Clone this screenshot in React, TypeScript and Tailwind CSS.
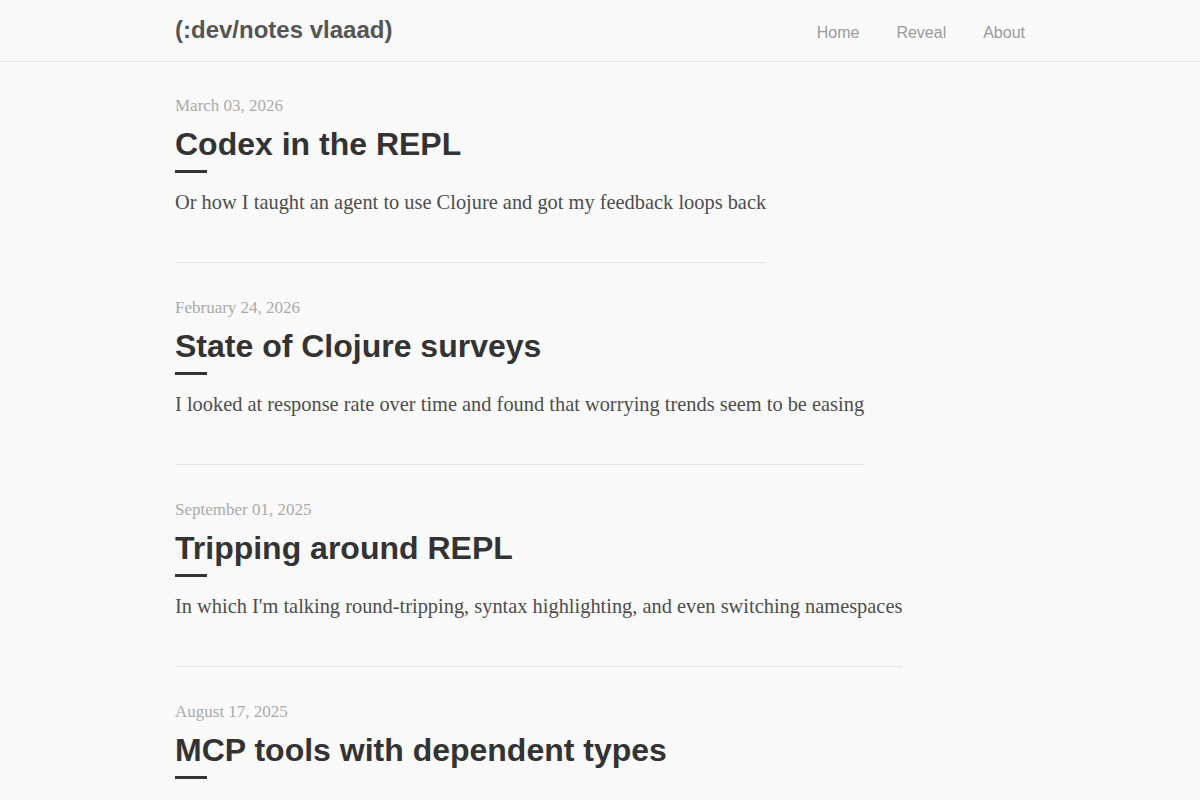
type Post = {
  date: string;
  title: string;
  summary?: string;
};

const posts: Post[] = [
  {
    date: "March 03, 2026",
    title: "Codex in the REPL",
    summary: "Or how I taught an agent to use Clojure and got my feedback loops back",
  },
  {
    date: "February 24, 2026",
    title: "State of Clojure surveys",
    summary: "I looked at response rate over time and found that worrying trends seem to be easing",
  },
  {
    date: "September 01, 2025",
    title: "Tripping around REPL",
    summary: "In which I'm talking round-tripping, syntax highlighting, and even switching namespaces",
  },
  {
    date: "August 17, 2025",
    title: "MCP tools with dependent types",
  },
];

const navItems = ["Home", "Reveal", "About"];

export default function App() {
  return (
    <div className="min-h-screen bg-[#f9f9f9] font-['Liberation_Sans',Arial,sans-serif]">
      <header className="h-[62px] border-b border-[#e8e8e8]">
        <div className="mx-auto flex h-full w-[850px] items-center justify-between">
          <a className="-mt-[2px] text-[24px] font-bold text-[#555]">(:dev/notes vlaaad)</a>
          <nav className="flex gap-[37px] pt-1 text-[16px] text-[#999]">
            {navItems.map((item) => (
              <a key={item}>{item}</a>
            ))}
          </nav>
        </div>
      </header>

      <main className="mx-auto w-[850px] pt-[33px]">
        {posts.map((post) => (
          <article key={post.title} className="mb-[34px] w-fit border-b border-[#e4e4e4] pb-[46px]">
            <div className="font-['Liberation_Serif',serif] text-[17px] leading-[22px] text-[#aaa]">
              {post.date}
            </div>
            <h2 className="mt-[7px] text-[32px] font-bold leading-10 text-[#333]">{post.title}</h2>
            <div className="mt-[6px] h-[3px] w-8 bg-[#333]" />
            {post.summary && (
              <p className="mt-[15px] font-['Liberation_Serif',serif] text-[20.4px] leading-7 text-[#4d4d4d]">
                {post.summary}
              </p>
            )}
          </article>
        ))}
      </main>
    </div>
  );
}
